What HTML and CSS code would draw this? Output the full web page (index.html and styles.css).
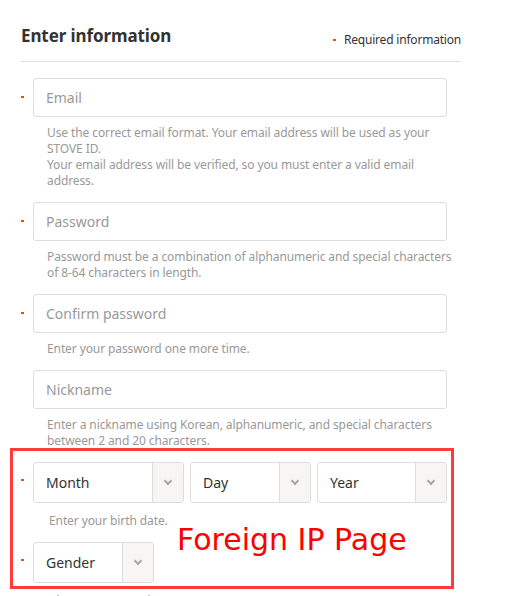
FILE: index.html
```html
<!DOCTYPE html>
<html lang="en">
<head>
  <meta charset="UTF-8" />
  <meta name="viewport" content="width=device-width, initial-scale=1.0" />
  <title>Enter information - STOVE</title>
  <link rel="stylesheet" href="styles.css">
</head>
<body>
  <div class="page">
    <header class="head">
      <h1>Enter information</h1>
      <span class="req"><i class="dot"></i>Required information</span>
    </header>

    <div class="field">
      <i class="dot"></i>
      <div class="body">
        <input class="box" type="text" placeholder="Email">
        <p class="help">Use the correct email format. Your email address will be used as your STOVE ID.<br>Your email address will be verified, so you must enter a valid email address.</p>
      </div>
    </div>

    <div class="field">
      <i class="dot"></i>
      <div class="body">
        <input class="box" type="password" placeholder="Password">
        <p class="help">Password must be a combination of alphanumeric and special characters of 8-64 characters in length.</p>
      </div>
    </div>

    <div class="field">
      <i class="dot"></i>
      <div class="body">
        <input class="box" type="password" placeholder="Confirm password">
        <p class="help">Enter your password one more time.</p>
      </div>
    </div>

    <div class="field">
      <span class="nodot"></span>
      <div class="body">
        <input class="box" type="text" placeholder="Nickname">
        <p class="help">Enter a nickname using Korean, alphanumeric, and special characters between 2 and 20 characters.</p>
      </div>
    </div>

    <div class="field sel-field">
      <i class="dot"></i>
      <div class="body">
        <div class="selects">
          <div class="select month"><span>Month</span><b class="arrow"></b></div>
          <div class="select day"><span>Day</span><b class="arrow"></b></div>
          <div class="select year"><span>Year</span><b class="arrow"></b></div>
        </div>
        <p class="help help-sel">Enter your birth date.</p>
      </div>
    </div>

    <div class="field sel-field">
      <i class="dot"></i>
      <div class="body">
        <div class="selects">
          <div class="select gender"><span>Gender</span><b class="arrow"></b></div>
        </div>
        <p class="help help-sel">Choose your gender.</p>
      </div>
    </div>

    <!-- annotation over the birth date / gender block -->
    <div class="mark">
      <span class="mark-text">Foreign IP Page</span>
    </div>
  </div>
</body>
</html>
```

FILE: styles.css
```css
:root {
  --text: #333333;
  --muted: #999999;
  --line: #dddddd;
  --dot: #f04b00;
  --mark: #ff3b3b;
}

body {
  margin: 0;
  padding: 0;
  background: #ffffff;
  font-family: "Noto Sans", "Noto Sans CJK KR", sans-serif;
  color: var(--text);
}

.page {
  position: relative;
  width: 440px;
  padding: 24px 0 0 21px;
}

/* HEADER */
.head {
  display: flex;
  justify-content: space-between;
  align-items: center;
  height: 24px;
  padding-bottom: 13px;
  border-bottom: 1px solid var(--line);
  margin-bottom: 16px;
}

.head h1 {
  margin: 0;
  font-size: 17px;
  font-weight: 700;
  line-height: 24px;
  letter-spacing: -0.1px;
}

.req {
  display: flex;
  align-items: center;
  font-size: 12px;
  letter-spacing: -0.2px;
  margin-top: 7px;
  color: #333;
}

.req .dot {
  margin-right: 8px;
}

.dot {
  display: block;
  width: 3px;
  height: 2px;
  background: var(--dot);
}

/* CAMPOS */
.field {
  display: flex;
  align-items: flex-start;
  margin-bottom: 13px;
}

.field > .dot,
.field > .nodot {
  width: 3px;
  margin: 18px 9px 0 0;
}

.sel-field > .dot {
  margin-top: 17px;
}

.body {
  width: 414px;
}

.box {
  display: block;
  box-sizing: border-box;
  width: 414px;
  height: 39px;
  padding: 0 12px;
  border: 1px solid var(--line);
  border-radius: 3px;
  font-family: inherit;
  font-size: 14px;
  color: var(--text);
  outline: none;
}

.box::placeholder {
  color: var(--muted);
}

.help {
  margin: 8px -10px 0 0;
  padding-left: 14px;
  font-size: 12px;
  line-height: 16px;
  letter-spacing: -0.1px;
  color: var(--muted);
}

.help-sel {
  margin-top: 10px;
  padding-left: 16px;
}

/* SELECTS */
.selects {
  display: flex;
  gap: 6px;
}

.select {
  display: flex;
  box-sizing: border-box;
  height: 41px;
  border: 1px solid var(--line);
  border-radius: 3px;
  font-size: 14px;
}

.select span {
  flex: 1;
  display: flex;
  align-items: center;
  padding-left: 12px;
}

.select .arrow {
  position: relative;
  width: 30px;
  border-left: 1px solid var(--line);
  background: #f7f6f4;
  border-radius: 0 3px 3px 0;
}

.select .arrow::after {
  content: "";
  position: absolute;
  left: 12px;
  top: 15px;
  width: 4px;
  height: 4px;
  border-right: 2px solid #a8a8a8;
  border-bottom: 2px solid #a8a8a8;
  transform: rotate(45deg);
}

.month { width: 151px; }
.day { width: 121px; }
.year { width: 130px; }
.gender { width: 121px; }

/* ANOTACAO */
.mark {
  position: absolute;
  left: 10px;
  top: 448px;
  width: 438px;
  height: 135px;
  border: 3px solid var(--mark);
}

.mark-text {
  position: absolute;
  left: 164px;
  top: 71px;
  font-family: "DejaVu Sans", sans-serif;
  font-size: 30px;
  color: #ff0000;
  line-height: 36px;
}
```
